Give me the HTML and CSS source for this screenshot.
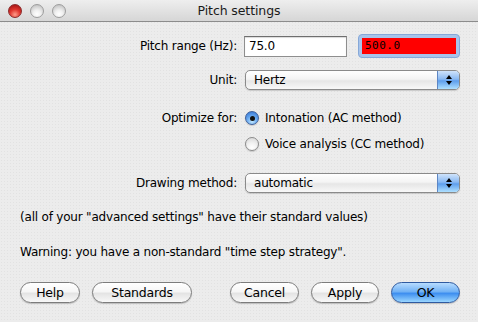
FILE: index.html
```html
<!DOCTYPE html>
<html>
<head>
<meta charset="utf-8">
<link rel="stylesheet" href="styles.css">
</head>
<body>
<div class="window">
  <div class="titlebar">
    <div class="lights">
      <span class="light red"></span>
      <span class="light"></span>
      <span class="light"></span>
    </div>
    <div class="title">Pitch settings</div>
  </div>
  <div class="content">
    <div class="row r1">
      <div class="lbl">Pitch range (Hz):</div>
      <div class="ctrl">
        <div class="field">75.0</div>
        <div class="ring"><div class="field red">500.0</div></div>
      </div>
    </div>
    <div class="row r2">
      <div class="lbl">Unit:</div>
      <div class="ctrl">
        <div class="popup"><span class="ptext">Hertz</span><span class="stepper"><svg width="8" height="12" viewBox="0 0 8 12"><path d="M4 1 L7 5 L1 5 Z M4 11 L7 7 L1 7 Z" fill="#000"/></svg></span></div>
      </div>
    </div>
    <div class="row r3">
      <div class="lbl">Optimize for:</div>
      <div class="ctrl">
        <span class="radio on"><span class="dot"></span></span><span class="rtext">Intonation (AC method)</span>
      </div>
    </div>
    <div class="row r4">
      <div class="lbl"></div>
      <div class="ctrl">
        <span class="radio"></span><span class="rtext">Voice analysis (CC method)</span>
      </div>
    </div>
    <div class="row r5">
      <div class="lbl">Drawing method:</div>
      <div class="ctrl">
        <div class="popup"><span class="ptext">automatic</span><span class="stepper"><svg width="8" height="12" viewBox="0 0 8 12"><path d="M4 1 L7 5 L1 5 Z M4 11 L7 7 L1 7 Z" fill="#000"/></svg></span></div>
      </div>
    </div>
    <div class="note n1">(all of your "advanced settings" have their standard values)</div>
    <div class="note n2">Warning: you have a non-standard "time step strategy".</div>
    <div class="buttons">
      <div class="group">
        <div class="btn b-help">Help</div>
        <div class="btn b-std">Standards</div>
      </div>
      <div class="group">
        <div class="btn b-cancel">Cancel</div>
        <div class="btn b-apply">Apply</div>
        <div class="btn b-ok default">OK</div>
      </div>
    </div>
  </div>
</div>
</body>
</html>
```
FILE: styles.css
```css
html, body {
  margin: 0;
  padding: 0;
}
body {
  width: 478px;
  height: 322px;
  overflow: hidden;
  font-family: "DejaVu Sans", sans-serif;
  font-size: 12px;
  letter-spacing: -0.2px;
  color: #000;
}
.window {
  width: 478px;
  height: 322px;
  background-color: #ececec;
  background-image: radial-gradient(circle, #e2e2e2 0.6px, transparent 0.8px);
  background-size: 3px 3px;
  display: flex;
  flex-direction: column;
}
.titlebar {
  height: 21px;
  flex: none;
  position: relative;
  background: linear-gradient(#eeeeee, #d6d6d6);
  border-bottom: 1px solid #8c8c8c;
  display: flex;
  align-items: center;
  justify-content: center;
}
.lights {
  position: absolute;
  left: 8px;
  top: 4px;
  display: flex;
  gap: 8px;
}
.light {
  width: 12px;
  height: 12px;
  border-radius: 50%;
  border: 1px solid #9d9d9d;
  background: radial-gradient(circle at 50% 75%, #ffffff 0, #f0f0f0 35%, #c8c8c8 80%);
  box-sizing: content-box;
}
.light.red {
  border-color: #8a2a2a;
  background: radial-gradient(circle at 50% 80%, #ff9c8a 0, #e0362e 45%, #a41414 90%);
}
.title {
  font-size: 12.5px;
  color: #1a1a1a;
  letter-spacing: -0.1px;
}
.content {
  padding-top: 12px;
  display: flex;
  flex-direction: column;
}
.row {
  display: flex;
  align-items: center;
}
.lbl {
  width: 237px;
  flex: none;
  text-align: right;
}
.ctrl {
  margin-left: 8px;
  display: flex;
  align-items: center;
}
.r1 { height: 24px; }
.r2 { height: 20px; margin-top: 12px; }
.r3 { height: 18px; margin-top: 19px; }
.r4 { height: 18px; margin-top: 8px; }
.r5 { height: 20px; margin-top: 20px; }
.field {
  box-sizing: border-box;
  width: 103px;
  height: 21px;
  background: #fff;
  border: 1px solid #8e8e8e;
  border-top-color: #6e6e6e;
  box-shadow: inset 0 1px 1px rgba(0,0,0,0.15);
  padding: 2px 0 0 4px;
  font-size: 12px;
  line-height: 15px;
  margin-left: -1px;
}
.ring {
  margin-left: 11px;
  padding: 3px 3px 4px 3px;
  border-radius: 4px;
  background: #a8c4ea;
  border: 1px solid #86a8d8;
  box-sizing: border-box;
  width: 102px;
  height: 24px;
  display: flex;
}
.field.red {
  width: 94px;
  height: 16px;
  background: #ff0000;
  border: none;
  box-shadow: none;
  padding: 0 0 0 3px;
  line-height: 16px;
  margin: 0;
  font-family: "DejaVu Sans Mono", monospace;
  font-size: 11px;
  letter-spacing: 0.5px;
}
.popup {
  box-sizing: border-box;
  width: 215px;
  height: 20px;
  border: 1px solid #8a8a8a;
  border-radius: 5px;
  background: linear-gradient(#ffffff 0%, #f4f4f4 45%, #e6e6e6 55%, #f8f8f8 100%);
  display: flex;
  align-items: center;
  overflow: hidden;
  box-shadow: 0 1px 1px rgba(0,0,0,0.15);
}
.ptext {
  flex: 1;
  padding-left: 8px;
}
.stepper {
  width: 21px;
  height: 100%;
  border-left: 1px solid #5d86c4;
  background: linear-gradient(#cfe3fb 0%, #8ab9f2 45%, #5e9eec 55%, #aee0ff 100%);
  display: flex;
  align-items: center;
  justify-content: center;
}
.radio {
  box-sizing: border-box;
  width: 14px;
  height: 14px;
  border-radius: 50%;
  border: 1px solid #8a8a8a;
  background: radial-gradient(circle at 50% 80%, #ffffff 0, #f2f2f2 40%, #d4d4d4 100%);
  display: flex;
  align-items: center;
  justify-content: center;
  box-shadow: 0 1px 1px rgba(0,0,0,0.15);
}
.radio.on {
  border-color: #3d5f9a;
  background: radial-gradient(circle at 50% 80%, #bfe6ff 0, #6aaaf0 45%, #2e6fd0 100%);
}
.dot {
  width: 5px;
  height: 5px;
  border-radius: 50%;
  background: #111;
}
.rtext {
  margin-left: 6px;
}
.note {
  padding-left: 20px;
  height: 16px;
  line-height: 16px;
}
.n1 { margin-top: 16px; }
.n2 { margin-top: 19px; }
.buttons {
  margin-top: 22px;
  padding: 0 18px 0 20px;
  display: flex;
  justify-content: space-between;
}
.group {
  display: flex;
  gap: 12px;
}
.btn {
  box-sizing: border-box;
  height: 21px;
  border: 1px solid #7c7c7c;
  border-radius: 11px;
  background: linear-gradient(#ffffff 0%, #f6f6f6 45%, #e4e4e4 55%, #f8f8f8 100%);
  box-shadow: 0 1px 1px rgba(0,0,0,0.2);
  display: flex;
  align-items: center;
  justify-content: center;
  font-size: 12.5px;
}
.b-help { width: 60px; }
.b-std { width: 100px; }
.b-cancel { width: 69px; }
.b-apply { width: 68px; }
.b-ok { width: 69px; }
.btn.default {
  border-color: #2f5aa0;
  background: linear-gradient(#b7dcff 0%, #72b2f5 45%, #3e8ff0 55%, #9ad6ff 100%);
}
```
